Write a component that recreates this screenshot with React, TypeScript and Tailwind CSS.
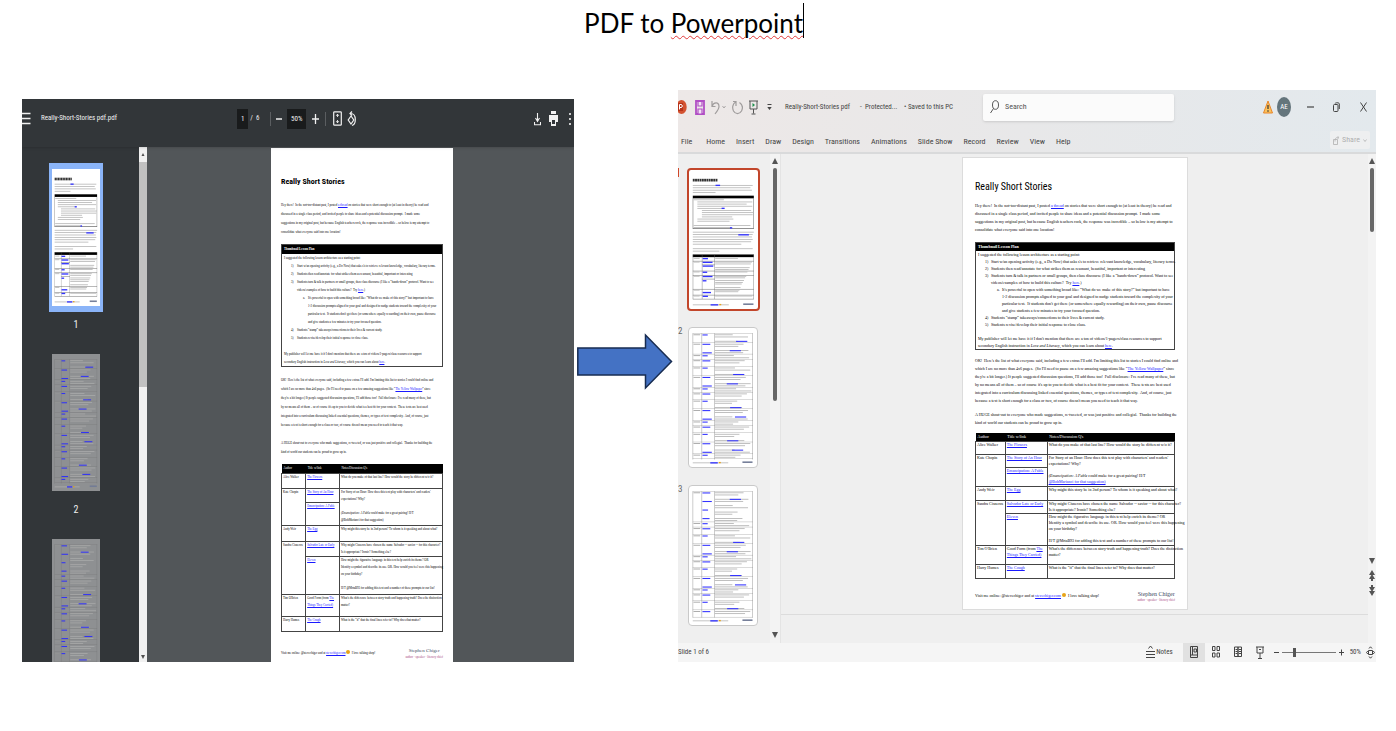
import React from "react";

type Kind = "pdf" | "ppt";

const Link = ({ children }: { children: React.ReactNode }) => (
  <a href="#" className="text-[#1a1aff] underline">
    {children}
  </a>
);

const Lines = ({ lines }: { lines: React.ReactNode[] }) => (
  <>
    {lines.map((l, i) => (
      <div key={i}>{l || "\u00a0"}</div>
    ))}
  </>
);

const intro: React.ReactNode[] = [
  <>Hey there!&nbsp; In the not-too-distant past, I posted <Link>a thread</Link> on stories that were short enough to (at least in theory) be read and</>,
  "discussed in a single class period, and invited people to share ideas and a potential discussion prompt.  I made some",
  "suggestions in my original post, but because English teachers rock, the response was incredible – so below is my attempt to",
  "consolidate what everyone said into one location!",
];

const second: React.ReactNode[] = [
  "OK!  Here's the list of what everyone said, including a few extras I'll add. I'm limiting this list to stories I could find online and",
  <>which I are no more than 4x6 pages.&nbsp; (So I'll need to pause on a few amazing suggestions like “<Link>The Yellow Wallpaper</Link>” since</>,
  "they're a bit longer.) If people suggested discussion questions, I'll add those too!  Full disclosure: I've read many of these, but",
  "by no means all of them – so of course it's up to you to decide what is a best fit for your context.  These texts are best used",
  "integrated into a curriculum discussing linked essential questions, themes, or types of text complexity.  And, of course, just",
  "because a text is short enough for a class or two, of course doesn't mean you need to teach it that way.",
];

const third = [
  "A HUGE shout-out to everyone who made suggestions, re-tweeted, or was just positive and collegial.  Thanks for building the",
  "kind of world our students can be proud to grow up in.",
];

function Plan() {
  const num = "flex pl-[7px]";
  const n = "w-[6px] shrink-0";
  return (
    <>
      <div>I suggested the following lesson architecture as a starting point:</div>
      <div className={num}><span className={n}>1)</span>Start w/an opening activity (e.g., a Do Now) that asks s's to retrieve relevant knowledge, vocabulary, literary terms.</div>
      <div className={num}><span className={n}>2)</span>Students then read/annotate for what strikes them as resonant, beautiful, important or interesting</div>
      <div className={num}><span className={n}>3)</span>Students turn &amp; talk in partners or small groups, then class discourse (I like a “hands-down” protocol. Want to see</div>
      <div className="pl-[13px]">videos/examples of how to build this culture?&nbsp; Try <Link>here</Link>.)</div>
      <div className="flex pl-[19px]"><span className="w-[5px] shrink-0">a.</span>It's powerful to open with something broad like: “What do we make of this story?” but important to have</div>
      <div className="pl-6">1-2 discussion prompts aligned to your goal and designed to nudge students toward the complexity of your</div>
      <div className="pl-6">particular text.&nbsp; If students don't get there (or somewhere equally rewarding) on their own, pause discourse</div>
      <div className="pl-6">and give students a few minutes to try your focused question.</div>
      <div className={num}><span className={n}>4)</span>Students “stamp” takeaways/connections to their lives &amp; current study.</div>
      <div className={num}><span className={n}>5)</span>Students revise/develop their initial response to close class.</div>
      <div>&nbsp;</div>
      <div>My publisher will let me have it if I don't mention that there are a ton of videos/1-pagers/class resources to support</div>
      <div>secondary English instruction in <i>Love and Literacy</i>, which you can learn about <Link>here</Link>.</div>
    </>
  );
}

const rowSizes = {
  pdf: { head: "h-[9px]", a: "h-[15px]", k1: "h-[14px]", k2: "h-[23px]", w: "h-4", s1: "h-[14px]", s2: "h-[38px]", t: "h-[22px]", m: "h-[15px]" },
  ppt: { head: "h-2", a: "h-[13px]", k1: "h-[13px]", k2: "h-[19px]", w: "h-[14px]", s1: "h-[13px]", s2: "h-8", t: "h-[19px]", m: "h-[14px]" },
};

function StoryTable({ kind }: { kind: Kind }) {
  const s = rowSizes[kind];
  const td = "border border-[#444] p-0 pl-px align-top";
  const lead = kind === "pdf" ? "leading-[7px]" : "leading-[6px]";
  return (
    <table className={`w-full table-fixed border-collapse ${lead}`}>
      <colgroup><col className="w-[15%]" /><col className="w-[21%]" /><col className="w-[64%]" /></colgroup>
      <thead className="bg-black text-left text-white">
        <tr className={s.head}>
          <th className="p-0 pl-[2px] font-normal">Author</th>
          <th className="p-0 pl-[2px] font-normal">Title w/link</th>
          <th className="p-0 pl-[2px] font-normal">Notes/Discussion Q's</th>
        </tr>
      </thead>
      <tbody>
        <tr className={s.a}>
          <td className={td}>Alice Walker</td>
          <td className={td}><Link>The Flowers</Link></td>
          <td className={td}>What do you make of that last line? How would the story be different w/o it?</td>
        </tr>
        <tr className={s.k1}>
          <td className={td} rowSpan={2}>Kate Chopin</td>
          <td className={td}><Link>The Story of An Hour</Link></td>
          <td className={td} rowSpan={2}>
            <Lines lines={[
              "For Story of an Hour: How does this text play with characters' and readers'",
              "expectations? Why?",
              "",
              <><i>(Emancipation: A Fable</i> could make for a great pairing! H/T</>,
              kind === "ppt" ? <Link>@BobMarianci for that suggestion)</Link> : "@BobMarianci for that suggestion)",
            ]} />
          </td>
        </tr>
        <tr className={s.k2}><td className={td}><Link>Emancipation: A Fable</Link></td></tr>
        <tr className={s.w}>
          <td className={td}>Andy Weir</td>
          <td className={td}><Link>The Egg</Link></td>
          <td className={td}>Why might this story be in 2nd person? To whom is it speaking and about what?</td>
        </tr>
        <tr className={s.s1}>
          <td className={td} rowSpan={2}>Sandra Cisneros</td>
          <td className={td}><Link>Salvador Late or Early</Link></td>
          <td className={td}>
            <Lines lines={["Why might Cisneros have chosen the name Salvador -- savior -- for this character?", "Is it appropriate? Ironic? Something else?"]} />
          </td>
        </tr>
        <tr className={s.s2}>
          <td className={td}><Link>Eleven</Link></td>
          <td className={td}>
            <Lines lines={[
              "How might the figurative language in this text help enrich its theme? OR",
              "Identify a symbol and describe its use. OR. How would you feel were this happening",
              "on your birthday?",
              "",
              "H/T @MrtaB93 for adding this text and a number of these prompts to our list!",
            ]} />
          </td>
        </tr>
        <tr className={s.t}>
          <td className={td}>Tim O'Brien</td>
          <td className={td}>Good Form (from <Link>The<br />Things They Carried)</Link></td>
          <td className={td}>
            <Lines lines={["What's the difference between story-truth and happening-truth? Does the distinction", "matter?"]} />
          </td>
        </tr>
        <tr className={s.m}>
          <td className={td}>Harry Humes</td>
          <td className={td}><Link>The Cough</Link></td>
          <td className={td}>What is the “it” that the final lines refer to? Why does that matter?</td>
        </tr>
      </tbody>
    </table>
  );
}

function Story({ kind }: { kind: Kind }) {
  const pdf = kind === "pdf";
  const para = pdf ? "leading-[9px]" : "leading-2";
  return (
    <article
      className={`shrink-0 whitespace-pre bg-white font-['Liberation_Serif',serif] text-black ${
        pdf ? "w-[182px] px-[10px] pt-[25px] pb-4 text-[3px]" : "w-[226px] border border-[#dcdcdc] px-3 pt-[18px] pb-[7px] text-[4px]"
      }`}
    >
      <h2
        className={
          pdf
            ? "h-7 font-['Roboto_Condensed','Liberation_Sans',sans-serif] text-[8px] font-bold leading-[18px]"
            : "h-[26px] font-['Roboto_Condensed',Roboto,sans-serif] text-[10px] leading-[22px]"
        }
      >
        Really Short Stories
      </h2>
      <div className={para}><Lines lines={intro} /></div>
      <section className={`border border-[#444] ${pdf ? "mt-[7px] mb-[9px] leading-2" : "mt-2 mb-[7px] leading-[7px]"}`}>
        <h3 className={`bg-black pl-[2px] font-bold text-white ${pdf ? "h-[9px] leading-[9px]" : "h-2 leading-2"}`}>Thumbnail Lesson Plan</h3>
        <div className="pl-[2px]"><Plan /></div>
      </section>
      <div className={para}>
        <Lines lines={second} />
        <div className={pdf ? "mt-[9px]" : "mt-[6px]"}><Lines lines={third} /></div>
      </div>
      <div className={pdf ? "mt-[7px]" : "mt-[6px]"}><StoryTable kind={kind} /></div>
      <footer className={`flex items-center justify-between ${pdf ? "mt-[15px]" : "mt-[11px]"}`}>
        <p>Visit me online: @stevechiger and at <Link>stevechiger.com</Link> <span className="inline-block size-1 rounded-full bg-[#e8a317]" />  I love talking shop!</p>
        <div className="text-center">
          <div className={`text-[#3d4a63] ${pdf ? "text-[5px] leading-2" : "text-[6px] leading-2"}`}>Stephen Chiger</div>
          <div className="text-[3px] leading-1 text-[#a8457e]">author · speaker · literacy chief</div>
        </div>
      </footer>
    </article>
  );
}

/* Miniature pages */
type Bar = [number, number, number, number, string];

function firstPage(): Bar[] {
  const b: Bar[] = [];
  const text = (x: number, y: number, w: number) => b.push([x, y, w, 3, "#b4b4b4"]);
  for (let x = 10; x < 74; x += 6) b.push([x, 32 + ((x * 7) % 3), 5, 10, "#333"]);
  [158, 152, 156, 60].forEach((w, i) => text(10, 56 + i * 9, w));
  b.push([70, 55, 12, 5, "#3333ff"]);
  b.push([10, 96, 161, 10, "#000"], [10, 106, 1, 113, "#333"], [170, 106, 1, 113, "#333"], [10, 218, 161, 2, "#333"]);
  [80, 145, 130, 145, 70, 130, 136, 134, 80, 95, 85, 0, 150, 100].forEach((w, i) => w && text(i >= 5 && i <= 8 ? 34 : i > 0 && i < 11 ? 22 : 12, 110 + i * 8, w));
  b.push([86, 141, 8, 5, "#3333ff"], [108, 214, 6, 5, "#3333ff"]);
  [161, 158, 156, 158, 154, 128].forEach((w, i) => text(10, 231 + i * 9, w));
  b.push([130, 240, 28, 5, "#3333ff"]);
  text(10, 293, 158); text(10, 302, 70);
  b.push([10, 316, 161, 10, "#000"]);
  [340, 377, 393, 445, 467, 482].forEach((y) => b.push([10, y, 161, 2, "#777"]));
  [354, 407].forEach((y) => b.push([34, y, 34, 2, "#777"]));
  [10, 34, 67, 170].forEach((x) => b.push([x, 316, 1, 167, "#666"]));
  ([[329, 14], [343, 26], [357, 28], [380, 12], [396, 26], [412, 10], [456, 22], [470, 14]] as number[][]).forEach(([y, w]) => b.push([36, y, w, 5, "#3333ff"]));
  [329, 343, 350, 364, 371, 380, 396, 402, 412, 419, 425, 438, 448, 454, 470].forEach((y, i) => text(69, y, 60 + ((i * 37) % 40)));
  [329, 343, 380, 396, 448, 470].forEach((y) => text(12, y, 16));
  text(10, 503, 95); b.push([57, 502, 20, 5, "#3333ff"], [80, 501, 5, 5, "#e8a317"], [143, 499, 27, 6, "#77809a"]);
  return b;
}

function listPage(seed: number): Bar[] {
  const b: Bar[] = [];
  let y = 22;
  let i = seed;
  [10, 34, 67, 170].forEach((x) => b.push([x, 20, 1, 472, "#777"]));
  b.push([10, 20, 161, 1, "#777"]);
  while (y < 486) {
    const rows = seed === 3 && y < 30 ? 14 : 2 + ((i * 5) % 4);
    const top = y;
    for (let r = 0; r < rows && y < 486; r++) {
      if (r % 3 !== 2) b.push([69, y + 2, 45 + ((i * 29 + r * 41) % 55), 3, "#b0b0b0"]);
      if (r % 4 === 0) b.push([36, y + 2, 14 + ((i * 7 + r) % 14), 4, "#3333ff"]);
      if (r === 3) b.push([100 + ((i * 13) % 30), y + 2, 30, 4, "#3333ff"]);
      y += 8;
    }
    b.push([12, top + 2, 18, 3, "#999"], [10, y, 161, 1, "#777"]);
    y += 3;
    i++;
  }
  b.push([10, 503, 95, 3, "#b4b4b4"], [57, 502, 20, 5, "#3333ff"], [80, 501, 5, 5, "#e8a317"], [143, 499, 27, 6, "#77809a"]);
  return b;
}

const pages = [firstPage(), listPage(2), listPage(3), listPage(5)];

const Mini = ({ page, className }: { page: number; className: string }) => (
  <svg viewBox="0 0 182 520" preserveAspectRatio="none" className={`block w-full ${className}`} aria-hidden="true">
    {pages[page].map(([x, y, w, h, c], i) => (
      <rect key={i} x={x} y={y} width={w} height={h} fill={c} />
    ))}
  </svg>
);

const Ic = ({ w = 10, h = 14, vb, children }: { w?: number; h?: number; vb?: string; children: React.ReactNode }) => (
  <svg width={w} height={h} viewBox={vb ?? `0 0 ${w} ${h}`} fill="none" stroke="currentColor" preserveAspectRatio="none" className="shrink-0" aria-hidden="true">
    {children}
  </svg>
);

const B = ({ label, children, className = "" }: { label: string; children: React.ReactNode; className?: string }) => (
  <button type="button" aria-label={label} className={`flex shrink-0 items-center justify-center ${className}`}>
    {children}
  </button>
);

function PdfViewer() {
  return (
    <section className="mt-[9px] flex min-w-0 flex-[552] flex-col overflow-hidden bg-[#525659] contain-size font-['Roboto_Condensed',Roboto,sans-serif] text-[#f1f1f1]">
      <header className="z-10 flex h-12 shrink-0 items-center bg-[#323639] pb-[9px] text-[7px] shadow-sm">
        <div className="flex w-[39%] shrink-0 items-center gap-[10px]">
          <B label="Menu"><Ic w={9} h={13}><path d="M0 1.500h8.500M0 6.500h8.500M0 11.500h8.500" strokeWidth="1.600" /></Ic></B>
          <span className="whitespace-nowrap">Really-Short-Stories pdf.pdf</span>
        </div>
        <input aria-label="Page number" defaultValue="1" className="h-5 w-[11px] bg-[#191b1c] text-center" />
        <span className="ml-[2px] w-[10px] whitespace-pre">/  6</span>
        <i className="ml-[10px] h-[14px] w-px bg-[#5b5e61]" />
        <B label="Zoom out" className="ml-[5px]"><Ic w={6}><path d="M0 7h6" strokeWidth="1.500" /></Ic></B>
        <input aria-label="Zoom" defaultValue="50%" className="ml-[5px] h-5 w-[19px] bg-[#191b1c] text-center" />
        <B label="Zoom in" className="ml-[6px]"><Ic w={7}><path d="M0 7h7M3.500 2v10" strokeWidth="1.300" /></Ic></B>
        <i className="ml-[6px] h-[14px] w-px bg-[#5b5e61]" />
        <B label="Fit to page" className="ml-[7px]">
          <Ic w={9} h={15}><rect x=".7" y=".8" width="7.600" height="13.400" rx=".8" strokeWidth="1.200" /><path d="M4.500 3v3M3.200 4.800l1.300-1.600 1.300 1.600M4.500 9v3M3.200 10.200l1.300 1.600 1.300-1.600" strokeWidth=".9" /></Ic>
        </B>
        <B label="Rotate" className="ml-[5px]">
          <Ic w={9} h={16}><path d="M4 5L1.200 9 4 13l2.800-4z" strokeWidth="1.200" /><path d="M3.500 2.500C7 2.500 8.300 5 8.300 8.500S7 14 5 14.500M5 .5L3 2.500l2 2.200" strokeWidth="1.200" /></Ic>
        </B>
        <div className="ml-auto flex items-center gap-[8px] pr-[2px]">
          <B label="Download"><Ic w={7}><path d="M3.500 1v8M1.500 6l2 3.500 2-3.500M.5 10v2.800h6V10" strokeWidth="1.100" /></Ic></B>
          <B label="Print"><Ic w={9} h={15}><path d="M2 0h5v3H2zM0 4h9v7H7v4H2v-4H0z" fill="currentColor" stroke="none" /><path d="M3 9h3v4H3z" fill="#323639" stroke="none" /></Ic></B>
          <B label="More actions" className="pl-[2px]"><Ic w={4}><path d="M2 1v2M2 6v2M2 11v2" strokeWidth="1.600" /></Ic></B>
        </div>
      </header>
      <div className="flex min-h-0 flex-1">
        <nav aria-label="Page thumbnails" className="flex w-[117px] shrink-0 flex-col items-center overflow-hidden bg-[#323639] pt-4 pr-[9px] text-[10px]">
          <button type="button" aria-label="Page 1" className="w-[54px] shrink-0 bg-[#8ab4f8] px-[3px] py-[6px]"><span className="block bg-white"><Mini page={0} className="h-[137px]" /></span></button>
          <span className="flex h-[42px] shrink-0 items-start pt-[5px]">1</span>
          <button type="button" aria-label="Page 2" className="w-12 shrink-0 bg-[#939597] opacity-95"><Mini page={1} className="h-[137px]" /></button>
          <span className="flex h-12 shrink-0 items-start pt-[11px]">2</span>
          <button type="button" aria-label="Page 3" className="w-12 shrink-0 bg-[#939597] opacity-95"><Mini page={2} className="h-[137px]" /></button>
        </nav>
        <div className="flex w-2 shrink-0 flex-col items-center bg-[#f1f1f1] text-[#505050]">
          <Ic w={8} h={15}><path d="M2.500 9l1.500-3 1.500 3z" fill="currentColor" stroke="none" /></Ic>
          <div className="h-[225px] w-full bg-[#c1c1c1]" />
          <span className="mt-auto"><Ic w={8} h={12}><path d="M2 5l2 4 2-4z" fill="currentColor" stroke="none" /></Ic></span>
        </div>
        <div className="flex min-w-0 flex-1 items-start justify-center overflow-hidden pt-px pl-[3px]">
          <Story kind="pdf" />
        </div>
      </div>
    </section>
  );
}

const tabs = ["Home", "Insert", "Draw", "Design", "Transitions", "Animations", "Slide Show", "Record", "Review", "View", "Help"];

function PowerPoint() {
  const up = <path d="M1 7l3-6 3 6z" fill="#555" stroke="none" />;
  const down = <path d="M1 1l3 6 3-6z" fill="#555" stroke="none" />;
  return (
    <section className="flex min-w-0 flex-[698] flex-col overflow-hidden bg-[#efefef] font-['Roboto_Condensed',Roboto,sans-serif] text-[7px] text-[#444]">
      <header className="border-b-2 border-[#d9dadb] bg-linear-to-r from-[#ede8e7] via-[#e8e8e9] to-[#e3e9ed]">
        <div className="flex h-[34px] items-center whitespace-nowrap">
          <svg width="9" height="14" viewBox="0 0 9 14" className="shrink-0" aria-hidden="true"><ellipse cx="3.500" cy="7" rx="5.200" ry="7" fill="#d35230" /><path d="M0 3h5v8H0z" fill="#b7331a" /><path d="M1.500 9.500v-5H3a1.300 1.500 0 010 3H1.500" fill="none" stroke="#fff" /></svg>
          <B label="Save" className="ml-2 text-[#b14fc5]"><Ic w={10} h={15}><path d="M1 1h8v13H1z" strokeWidth="1.800" /><path d="M3 1.500h4v4.500H3zM3 9h4v5H3z" fill="#f3e3f5" strokeWidth="1.200" /></Ic></B>
          <B label="Undo" className="ml-[6px] text-[#a09d9d]"><Ic w={9} h={15}><path d="M1 1v5.500h3.500M1 6.500C2.500 2 8 1.500 8 6.500 8 9 6 11.500 4 14" strokeWidth="1.200" /></Ic></B>
          <B label="Undo list" className="ml-[2px] text-[#a9a6a6]"><Ic w={4} h={6}><path d="M.5 2L2 4l1.500-2" /></Ic></B>
          <B label="Redo" className="ml-[6px] text-[#a09d9d]"><Ic w={11} h={15}><path d="M1 1.500h3V6M3.500 2C.5 4 0 8 1.500 11c2 3.500 6 3.500 8 0 1.500-3 .8-6.500-2-8.500" strokeWidth="1.200" /></Ic></B>
          <B label="Start presentation" className="ml-[6px] text-[#555]"><Ic w={9} h={15}><path d="M0 1h9M1 1v8h7V1M4.500 9v4.500M2.500 14h4" /><path d="M3.500 3v4l2.500-2z" fill="#1b8f4b" stroke="none" /></Ic></B>
          <B label="Customize" className="ml-[9px]"><Ic w={5} h={8}><path d="M.5 1.500h4" /><path d="M.3 4l2.200 3 2.200-3z" fill="currentColor" stroke="none" /></Ic></B>
          <span className="ml-[13px] w-[75px]">Really-Short-Stories pdf</span>
          <span className="w-[44px] whitespace-pre">-  Protected...</span>
          <span className="w-[79px]">• Saved to this PC</span>
          <label className="flex h-[27px] w-[191px] items-center gap-[6px] rounded-xs bg-[#fbfbfb] pl-[7px] shadow-sm">
            <Ic w={9} h={14}><ellipse cx="5.500" cy="5" rx="3" ry="4.300" strokeWidth=".9" /><path d="M3.500 8.500L.5 13" strokeWidth=".9" /></Ic>
            <input aria-label="Search" placeholder="Search" className="w-full text-[8px] outline-none placeholder:text-[#555]" />
          </label>
          <div className="ml-auto flex items-center pr-[9px]">
            <svg width="10" height="14" viewBox="0 0 10 14" aria-hidden="true"><path d="M5 1l4.500 12h-9z" fill="#fbc25c" stroke="#e8862a" /><path d="M5 5v4M5 10.300v1.400" stroke="#333" strokeWidth="1.200" /></svg>
            <span className="ml-1 flex h-5 w-[14px] items-center justify-center rounded-[50%] bg-[#64757c] text-[7px] text-white">AE</span>
            <B label="Minimize" className="ml-4"><Ic w={7}><path d="M0 7h7" strokeWidth="1.200" /></Ic></B>
            <B label="Restore" className="ml-[19px]"><Ic w={7} h={10}><rect x=".5" y="2.500" width="4.500" height="7" rx="1" /><path d="M2 1.500C2 .8 6.300 0 6.300 2v5" /></Ic></B>
            <B label="Close" className="ml-5"><Ic w={7} h={10}><path d="M.5.5l6 9M6.500.5l-6 9" /></Ic></B>
          </div>
        </div>
        <div className="flex h-7 items-start pr-[6px] pl-[3px] text-[8px]">
          <nav aria-label="Ribbon" className="flex gap-[11px] whitespace-nowrap pt-3 leading-3">
            <button type="button" className="mr-[3px]">File</button>
            {tabs.map((t) => <button key={t} type="button">{t}</button>)}
          </nav>
          <button type="button" className="mt-[7px] ml-auto flex h-[18px] items-center gap-[3px] rounded-xs bg-[#eeeff0] px-[3px] text-[#b0b0b0]">
            <Ic w={6} h={9}><path d="M.5 3.500h4v5h-4zM2 5.500C2 2 3 1.500 5.500 1.500M4.500.3L6 1.500 4.500 3" strokeWidth=".8" /></Ic>
            Share
            <Ic w={4} h={5}><path d="M.5 1.500L2 3.500l1.500-2" strokeWidth=".8" /></Ic>
          </button>
        </div>
      </header>
      <div className="flex">
        <nav aria-label="Slides" className="flex w-[92px] shrink-0 flex-col overflow-hidden pt-[14px] contain-size">
          {[0, 1, 2, 3].map((p) => (
            <div key={p} className={`flex shrink-0 items-start ${p ? "mb-[17px]" : "mb-4"}`}>
              <span className="flex w-[9px] shrink-0 text-[9px] leading-[9px] text-[#666]">
                {p === 0 && <i className="block h-[9px] w-px bg-[#d0482a]" />}
                {(p === 1 || p === 2) && p + 1}
              </span>
              <button type="button" aria-label={`Slide ${p + 1}`} className={p ? "ml-px w-[70px] rounded-sm border border-[#c9c9c9] bg-white" : "w-[73px] rounded-sm border-2 border-[#c2462b] bg-white"}>
                <Mini page={p} className="h-[139px]" />
              </button>
            </div>
          ))}
        </nav>
        <div className="flex w-[11px] shrink-0 flex-col items-center border-r border-[#e4e4e4] bg-[#f3f3f3] pt-[3px]">
          <Ic w={8} h={8}>{up}</Ic>
          <div className="mt-[3px] h-[233px] w-1 rounded-full bg-[#686868]" />
          <span className="mt-auto mb-1"><Ic w={8} h={8}>{down}</Ic></span>
        </div>
        <div className="flex min-w-0 flex-1 flex-col">
          <div className="flex justify-center border-b border-[#dcdcdc] pt-[3px] pb-1 pl-px">
            <Story kind="ppt" />
          </div>
          <div className="h-7" />
        </div>
        <div className="flex w-2 shrink-0 flex-col items-center bg-[#f3f3f3] pt-[3px]">
          <Ic w={8} h={8}>{up}</Ic>
          <div className="mt-[3px] h-16 w-1 rounded-full bg-[#686868]" />
          <div className="mt-auto mb-[46px] flex flex-col items-center gap-1">
            <Ic w={8} h={8}>{down}</Ic>
            <Ic w={8} h={12}><path d="M1 6l3-5 3 5zM1 10l3-5 3 5zM3 10h2v2H3z" fill="#555" stroke="none" /></Ic>
            <Ic w={8} h={12}><path d="M3 0h2v2H3zM1 2l3 5 3-5zM1 6l3 5 3-5z" fill="#555" stroke="none" /></Ic>
          </div>
        </div>
      </div>
      <footer className="flex h-[19px] items-center overflow-hidden bg-[#f5f5f5] whitespace-nowrap">
        <span>Slide 1 of 6</span>
        <button type="button" className="ml-auto flex items-center gap-px"><Ic w={9} h={14}><path d="M2.500 3.500L4.500 1l2 2.500M0 6.500h9M0 9.500h9M0 12.500h9" /></Ic>Notes</button>
        <B label="Normal view" className="ml-[10px] h-full w-[22px] bg-[#e1e1e1]"><Ic w={8} h={12}><path d="M.5.5h7v11h-7zM.5 9h7M2.500 1v8M4 3h2.500v3H4z" /></Ic></B>
        <B label="Slide sorter" className="ml-[7px]"><Ic w={8} h={12}><path d="M.5.5h2.500v4H.5zM5 .5h2.500v4H5zM.5 7h2.500v4H.5zM5 7h2.500v4H5z" /></Ic></B>
        <B label="Reading view" className="ml-[14px]"><Ic w={8} h={12}><path d="M.5 1h3.500v9.500H.5zM4 1h3.500v9.500H4zM1.500 3.500h2M1.500 5.500h2M1.500 7.500h2M5 3.500h2M5 5.500h2M5 7.500h2" /></Ic></B>
        <B label="Slide show" className="ml-[14px]"><Ic w={8} h={13}><path d="M0 1h8M1 1v6h6V1M4 7v5M2 12.500h4M3 3.500h2" /></Ic></B>
        <B label="Zoom out" className="ml-[10px]"><Ic w={5} h={7}><path d="M0 3.500h5" /></Ic></B>
        <input type="range" aria-label="Zoom level" min={10} max={100} defaultValue={30}
          className="ml-[3px] h-3 w-[54px] appearance-none bg-transparent [&::-webkit-slider-runnable-track]:h-px [&::-webkit-slider-runnable-track]:bg-[#777] [&::-webkit-slider-thumb]:-mt-1 [&::-webkit-slider-thumb]:h-[9px] [&::-webkit-slider-thumb]:w-[3px] [&::-webkit-slider-thumb]:appearance-none [&::-webkit-slider-thumb]:bg-[#555]" />
        <B label="Zoom in" className="ml-[3px]"><Ic w={5} h={7}><path d="M0 3.500h5M2.500.5v6" /></Ic></B>
        <span className="ml-[6px]">50%</span>
        <B label="Fit slide" className="ml-[5px] pr-px"><Ic w={9} h={13}><path d="M2.500 4.500h4v4h-4zM3 2.500L4.500.8 6 2.500M3 10.500l1.500 1.700L6 10.500M1.800 5L.5 6.500 1.800 8M7.200 5l1.300 1.500L7.200 8" /></Ic></B>
      </footer>
    </section>
  );
}

export default function App() {
  return (
    <main className="min-h-screen bg-white">
      <h1 className="flex justify-center pt-[3px] pr-2 pb-[47px] font-['Lato',sans-serif] text-[26px] leading-10 text-black">
        <span>
          PDF to <span className="underline decoration-[#e23a3a] decoration-wavy decoration-1 underline-offset-2">Powerpoint</span>
        </span>
        <i className="h-[35px] w-px bg-black" />
      </h1>
      <div className="flex pr-5 pl-[22px]">
        <PdfViewer />
        <div className="w-[104px] shrink-0 pt-[243px] pl-[3px]">
          <svg width="96" height="57" viewBox="0 0 96 57" aria-hidden="true" className="block">
            <path d="M.8 15H68.500V2L94.500 28.500 68.500 55V42H.8z" fill="#4472c4" stroke="#172c51" strokeWidth="1.500" />
          </svg>
        </div>
        <PowerPoint />
      </div>
    </main>
  );
}
